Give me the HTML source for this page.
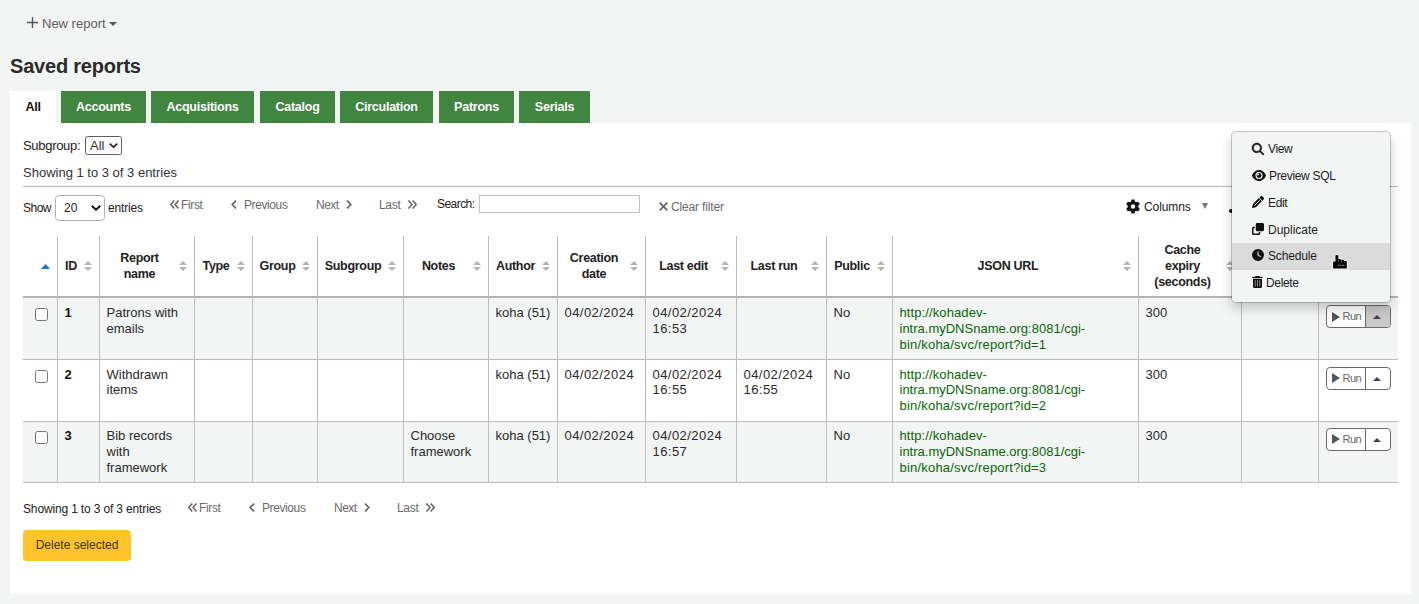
<!DOCTYPE html>
<html>
<head>
<meta charset="utf-8">
<title>Saved reports</title>
<style>
*{box-sizing:border-box;}
html,body{margin:0;padding:0;}
body{width:1419px;height:604px;overflow:hidden;background:#f3f4f4;font-family:"Liberation Sans",sans-serif;font-size:13px;line-height:16px;color:#202020;position:relative;}
.abs{position:absolute;white-space:nowrap;line-height:16px;}
svg{position:absolute;display:block;overflow:visible;}
#h1{left:10px;top:52px;font-size:20px;letter-spacing:-0.2px;font-weight:bold;color:#2b2b2b;line-height:28px;}
.tab{position:absolute;top:91px;height:32px;background:#408540;color:#fff;font-weight:bold;font-size:12.5px;letter-spacing:-0.25px;line-height:32px;text-align:center;white-space:nowrap;}
.tab.active{background:#fff;color:#111;}
#panel{position:absolute;left:10px;top:123px;width:1401px;height:471px;background:#fff;}
#hr1{position:absolute;left:23px;top:186px;width:1375px;height:1px;background:#b9b9b9;}
.box{position:absolute;background:#fff;}
.g{color:#6b6b6b;font-size:12px;}
table{position:absolute;left:23px;top:236px;width:1375px;border-collapse:collapse;table-layout:fixed;font-family:"Liberation Sans",sans-serif;font-size:13px;}
th,td{border-left:1px solid #bcbcbc;vertical-align:top;text-align:left;padding:0;white-space:nowrap;font-family:"Liberation Sans",sans-serif;}
th:first-child,td:first-child{border-left:none;}
thead tr{height:61px;}
th{vertical-align:middle;font-weight:bold;font-size:12.5px;letter-spacing:-0.3px;line-height:16px;text-align:center;position:relative;color:#222;border-bottom:2px solid #b4b4b4;padding:0 21px 0 7px;}
tbody tr{height:62px;}
tbody td{border-bottom:1px solid #bcbcbc;padding:7px 0 0 7px;line-height:16px;font-size:13px;color:#2a2a2a;position:relative;}
tbody tr.odd td{background:#f3f4f4;}
td.id{font-weight:bold;color:#111;}
td.d{letter-spacing:0.45px;}
.up1{position:relative;top:-1px;}
tr.r3{height:61px;}
tbody tr.r3 td{padding-top:6px;}
tr.r3 .cb{top:9px;}
tr.r3 .run{top:6px;}
td.url{color:#066706;}
.u1{letter-spacing:0.1px;}
.u3{letter-spacing:0.2px;}
.sort{position:absolute;right:6px;top:25px;width:9px;height:11px;}
.sort:before{content:"";position:absolute;left:0;top:0;border:4.5px solid transparent;border-bottom:4.3px solid #b5b5b5;border-top:none;}
.sort:after{content:"";position:absolute;left:0;top:6.1px;border:4.5px solid transparent;border-top:4.3px solid #b5b5b5;border-bottom:none;}
.cb{position:absolute;left:12px;top:10px;width:13px;height:13px;border:1px solid #767676;border-radius:2.5px;background:#fff;}
.run{position:absolute;left:7px;top:7px;width:65px;height:23px;border:1px solid #6a6a6a;border-radius:4px;background:#fff;overflow:hidden;}
.run .dv{position:absolute;left:38px;top:0;width:1px;height:21px;background:#6a6a6a;}
.run .rt{position:absolute;left:16px;top:3px;font-size:11px;letter-spacing:-0.55px;line-height:15px;color:#666;}
.run .pl{position:absolute;left:5px;top:5.5px;width:0;height:0;border-left:8.5px solid #555;border-top:5px solid transparent;border-bottom:5px solid transparent;}
.run .up{position:absolute;left:46.5px;top:9px;width:0;height:0;border-bottom:4px solid #444;border-left:4.5px solid transparent;border-right:4.5px solid transparent;}
.run .act{position:absolute;left:39px;top:0;width:24px;height:21px;background:#c9c9c9;}
#menu{position:absolute;left:1231px;top:131px;width:160px;height:172px;background:#f3f4f4;background-clip:padding-box;border:1px solid rgba(0,0,0,.2);border-radius:5px;box-shadow:0 6px 12px rgba(0,0,0,.18);}
#menu .hl{position:absolute;left:0;top:111px;width:158px;height:27px;background:#dbdbdb;}
.mi{position:absolute;white-space:nowrap;font-size:12px;line-height:16px;color:#1c1c1c;}
#del{position:absolute;left:23px;top:530px;width:108px;height:31px;background:#ffc32b;border-radius:4px;color:#3a3320;font-size:12px;line-height:31px;text-align:center;}
</style>
</head>
<body>
<!-- toolbar -->
<svg style="left:27px;top:17px" width="11" height="11" viewBox="0 0 11 11"><path d="M5.5 0v11M0 5.5h11" stroke="#565656" stroke-width="1.4" fill="none"/></svg>
<div class="abs" id="t_new" style="left:42px;top:16px;font-size:13px;color:#5e5e5e;">New report</div>
<svg style="left:109px;top:22px" width="8" height="4" viewBox="0 0 8 4"><path d="M0 0h8L4 4z" fill="#5a5a5a"/></svg>

<div class="abs" id="h1">Saved reports</div>

<div class="tab active" style="left:10px;width:46px;">All</div>
<div class="tab" style="left:61px;width:85px;">Accounts</div>
<div class="tab" style="left:151px;width:103px;">Acquisitions</div>
<div class="tab" style="left:260px;width:75px;">Catalog</div>
<div class="tab" style="left:340px;width:93px;">Circulation</div>
<div class="tab" style="left:439px;width:75px;">Patrons</div>
<div class="tab" style="left:519px;width:71px;">Serials</div>

<div id="panel"></div>

<!-- subgroup -->
<div class="abs" id="t_sub" style="left:23px;top:138px;font-size:13px;color:#222;letter-spacing:-0.3px;">Subgroup:</div>
<div class="box" style="left:85px;top:136px;width:37px;height:19px;border:1px solid #5f5f5f;border-radius:2.5px;"></div>
<div class="abs" id="t_all" style="left:90px;top:138px;font-size:13px;color:#333;">All</div>
<svg style="left:109px;top:143px" width="9" height="5" viewBox="0 0 9 5"><path d="M0.7 0.7L4.5 4.2L8.3 0.7" stroke="#222" stroke-width="1.7" fill="none"/></svg>

<div class="abs" id="t_show1" style="left:23px;top:165px;font-size:13px;color:#333;">Showing 1 to 3 of 3 entries</div>
<div id="hr1"></div>

<!-- length / paging -->
<div class="abs" id="t_show" style="left:23px;top:200px;font-size:12px;color:#222;letter-spacing:-0.5px;">Show</div>
<div class="box" style="left:55px;top:195px;width:50px;height:26px;border:1px solid #b0b0b0;border-radius:4px;"></div>
<div class="abs" id="t_20" style="left:64px;top:200px;font-size:12px;color:#222;">20</div>
<svg style="left:91px;top:205px" width="10" height="6" viewBox="0 0 10 6"><path d="M0.8 0.8L5 4.8L9.2 0.8" stroke="#111" stroke-width="1.9" fill="none"/></svg>
<div class="abs" id="t_ent" style="left:108px;top:200px;font-size:12px;color:#222;letter-spacing:-0.15px;">entries</div>

<svg style="left:170px;top:200px" width="9" height="9" viewBox="0 0 9 9"><path d="M4.300 0.5L0.8 4.500L4.300 8.500M8.500 0.5L5 4.500L8.500 8.500" stroke="#666" stroke-width="1.55" fill="none"/></svg>
<div class="abs g" id="t_first" style="left:181px;top:197px;letter-spacing:-0.35px;">First</div>
<svg style="left:231px;top:200px" width="6" height="9" viewBox="0 0 6 9"><path d="M5 0.600L1.200 4.500L5 8.400" stroke="#666" stroke-width="1.700" fill="none"/></svg>
<div class="abs g" id="t_prev" style="left:244px;top:197px;letter-spacing:-0.4px;">Previous</div>
<div class="abs g" id="t_next" style="left:316px;top:197px;letter-spacing:-0.5px;">Next</div>
<svg style="left:346px;top:200px" width="6" height="9" viewBox="0 0 6 9"><path d="M1 0.600L4.800 4.500L1 8.400" stroke="#666" stroke-width="1.700" fill="none"/></svg>
<div class="abs g" id="t_last" style="left:379px;top:197px;letter-spacing:-0.3px;">Last</div>
<svg style="left:408px;top:200px" width="9" height="9" viewBox="0 0 9 9"><path d="M0.5 0.5L4 4.500L0.5 8.500M4.700 0.5L8.200 4.500L4.700 8.500" stroke="#666" stroke-width="1.55" fill="none"/></svg>

<div class="abs" id="t_search" style="left:437px;top:196px;font-size:12px;color:#222;letter-spacing:-0.55px;">Search:</div>
<div class="box" style="left:479px;top:195px;width:161px;height:18px;border:1px solid #c2c2c2;"></div>
<svg style="left:659px;top:202px" width="9" height="9" viewBox="0 0 9 9"><path d="M0.7 0.7L8.3 8.3M8.3 0.7L0.7 8.3" stroke="#666" stroke-width="1.8" fill="none"/></svg>
<div class="abs g" id="t_clear" style="left:671px;top:199px;font-size:12px;letter-spacing:-0.15px;">Clear filter</div>

<!-- columns button -->
<svg style="left:1126px;top:199px" width="14" height="15" viewBox="0 0 512 512"><path fill="#111" d="M495.9 166.600c3.200 8.700 .500 18.400-6.400 24.600l-43.300 39.400c1.100 8.300 1.700 16.800 1.700 25.400s-.600 17.100-1.700 25.400l43.300 39.400c6.900 6.200 9.600 15.900 6.400 24.600c-4.400 11.900-9.700 23.300-15.800 34.300l-4.700 8.100c-6.600 11-14 21.400-22.100 31.200c-5.900 7.200-15.700 9.600-24.500 6.800l-55.700-17.700c-13.400 10.300-28.200 18.900-44 25.400l-12.500 57.100c-2 9.100-9 16.300-18.200 17.800c-13.800 2.300-28 3.500-42.500 3.500s-28.700-1.200-42.500-3.500c-9.200-1.500-16.200-8.700-18.200-17.800l-12.500-57.100c-15.800-6.500-30.600-15.100-44-25.400L83.100 425.900c-8.800 2.800-18.600 .300-24.500-6.800c-8.100-9.800-15.500-20.200-22.100-31.200l-4.700-8.100c-6.100-11-11.400-22.400-15.800-34.300c-3.200-8.700-.500-18.400 6.400-24.600l43.300-39.400C64.600 273.100 64 264.600 64 256s.600-17.100 1.700-25.400L22.400 191.200c-6.900-6.200-9.600-15.900-6.400-24.600c4.400-11.900 9.700-23.300 15.800-34.300l4.700-8.100c6.600-11 14-21.400 22.100-31.200c5.900-7.200 15.700-9.600 24.500-6.800l55.700 17.700c13.400-10.300 28.200-18.900 44-25.400l12.500-57.100c2-9.100 9-16.300 18.200-17.800C227.300 1.200 241.500 0 256 0s28.700 1.200 42.500 3.500c9.200 1.500 16.200 8.700 18.200 17.800l12.500 57.100c15.800 6.500 30.600 15.100 44 25.400l55.700-17.700c8.800-2.800 18.600-.300 24.500 6.800c8.100 9.800 15.500 20.200 22.100 31.200l4.700 8.100c6.100 11 11.400 22.400 15.800 34.300zM256 336a80 80 0 1 0 0-160 80 80 0 1 0 0 160z"/></svg>
<div class="abs" id="t_cols" style="left:1144px;top:199px;font-size:12px;color:#1a1a1a;letter-spacing:-0.1px;">Columns</div>
<svg style="left:1202px;top:203px" width="6" height="6" viewBox="0 0 6 6"><path d="M0 0h6L3 6z" fill="#777"/></svg>
<div style="position:absolute;left:1229px;top:209px;width:4px;height:4px;background:#111;border-radius:2px;"></div>

<table>
<colgroup>
<col style="width:34px"><col style="width:42px"><col style="width:95px"><col style="width:58px"><col style="width:65px"><col style="width:86px"><col style="width:85px"><col style="width:69px"><col style="width:88px"><col style="width:91px"><col style="width:90px"><col style="width:66px"><col style="width:246px"><col style="width:103px"><col style="width:77px"><col style="width:80px">
</colgroup>
<thead>
<tr>
<th><svg style="left:18px;top:28px" width="9" height="5" viewBox="0 0 9 5"><path d="M0 5h9L4.500 0z" fill="#1a6fd0"/></svg></th><th>ID<span class="sort"></span></th><th>Report<br>name<span class="sort"></span></th><th>Type<span class="sort"></span></th><th>Group<span class="sort"></span></th><th>Subgroup<span class="sort"></span></th><th>Notes<span class="sort"></span></th><th>Author<span class="sort"></span></th><th>Creation<br>date<span class="sort"></span></th><th>Last edit<span class="sort"></span></th><th>Last run<span class="sort"></span></th><th>Public<span class="sort"></span></th><th>JSON URL<span class="sort"></span></th><th>Cache<br>expiry<br>(seconds)<span class="sort"></span></th><th></th><th></th>
</tr>
</thead>
<tbody>
<tr class="odd"><td><span class="cb"></span></td><td class="id">1</td><td>Patrons with<br>emails</td><td></td><td></td><td></td><td></td><td>koha (51)</td><td class="d">04/02/2024</td><td class="d">04/02/2024<br>16:53</td><td></td><td>No</td><td class="url"><span class="u1">http://kohadev-</span><br>intra.myDNSname.org:8081/cgi-<br><span class="u3">bin/koha/svc/report?id=1</span></td><td>300</td><td></td><td><div class="run"><span class="act"></span><span class="pl"></span><span class="rt">Run</span><span class="dv"></span><span class="up"></span></div></td></tr>
<tr class="r2"><td><span class="cb"></span></td><td class="id">2</td><td>Withdrawn<br><span class="up1">items</span></td><td></td><td></td><td></td><td></td><td>koha (51)</td><td class="d">04/02/2024</td><td class="d">04/02/2024<br><span class="up1">16:55</span></td><td class="d">04/02/2024<br><span class="up1">16:55</span></td><td>No</td><td class="url"><span class="u1">http://kohadev-</span><br><span class="up1">intra.myDNSname.org:8081/cgi-</span><br><span class="u3 up1">bin/koha/svc/report?id=2</span></td><td>300</td><td></td><td><div class="run"><span class="pl"></span><span class="rt">Run</span><span class="dv"></span><span class="up"></span></div></td></tr>
<tr class="odd r3"><td><span class="cb"></span></td><td class="id">3</td><td>Bib records<br>with<br>framework</td><td></td><td></td><td></td><td>Choose<br>framework</td><td>koha (51)</td><td class="d">04/02/2024</td><td class="d">04/02/2024<br>16:57</td><td></td><td>No</td><td class="url"><span class="u1">http://kohadev-</span><br>intra.myDNSname.org:8081/cgi-<br><span class="u3">bin/koha/svc/report?id=3</span></td><td>300</td><td></td><td><div class="run"><span class="pl"></span><span class="rt">Run</span><span class="dv"></span><span class="up"></span></div></td></tr>
</tbody>
</table>

<!-- bottom paging -->
<div class="abs" id="t_show2" style="left:23px;top:501px;font-size:12px;color:#222;letter-spacing:-0.15px;">Showing 1 to 3 of 3 entries</div>
<svg style="left:188px;top:503px" width="9" height="9" viewBox="0 0 9 9"><path d="M4.300 0.5L0.8 4.500L4.300 8.500M8.500 0.5L5 4.500L8.500 8.500" stroke="#666" stroke-width="1.55" fill="none"/></svg>
<div class="abs g" id="b_first" style="left:199px;top:500px;letter-spacing:-0.35px;">First</div>
<svg style="left:249px;top:503px" width="6" height="9" viewBox="0 0 6 9"><path d="M5 0.600L1.200 4.500L5 8.400" stroke="#666" stroke-width="1.700" fill="none"/></svg>
<div class="abs g" id="b_prev" style="left:262px;top:500px;letter-spacing:-0.4px;">Previous</div>
<div class="abs g" id="b_next" style="left:334px;top:500px;letter-spacing:-0.5px;">Next</div>
<svg style="left:364px;top:503px" width="6" height="9" viewBox="0 0 6 9"><path d="M1 0.600L4.800 4.500L1 8.400" stroke="#666" stroke-width="1.700" fill="none"/></svg>
<div class="abs g" id="b_last" style="left:397px;top:500px;letter-spacing:-0.3px;">Last</div>
<svg style="left:426px;top:503px" width="9" height="9" viewBox="0 0 9 9"><path d="M0.5 0.5L4 4.500L0.5 8.500M4.700 0.5L8.200 4.500L4.700 8.500" stroke="#666" stroke-width="1.55" fill="none"/></svg>

<div id="del">Delete selected</div>

<!-- dropdown menu -->
<div id="menu"><div class="hl"></div></div>
<div class="mi" id="m_view" style="left:1268px;top:141px;letter-spacing:-0.35px;">View</div>
<div class="mi" id="m_prev" style="left:1269px;top:168px;letter-spacing:-0.32px;">Preview SQL</div>
<div class="mi" id="m_edit" style="left:1268px;top:195px;letter-spacing:-0.35px;">Edit</div>
<div class="mi" id="m_dup" style="left:1268px;top:222px;">Duplicate</div>
<div class="mi" id="m_sch" style="left:1268px;top:248px;letter-spacing:-0.15px;">Schedule</div>
<div class="mi" id="m_del" style="left:1266px;top:275px;letter-spacing:-0.35px;">Delete</div>

<svg style="left:1252px;top:143px" width="12" height="12" viewBox="0 0 512 512"><path fill="#111" stroke="#111" stroke-width="18" d="M416 208c0 45.900-14.900 88.300-40 122.700L502.600 457.400c12.500 12.500 12.500 32.800 0 45.300s-32.800 12.500-45.300 0L330.700 376c-34.400 25.200-76.800 40-122.700 40C93.100 416 0 322.900 0 208S93.100 0 208 0S416 93.100 416 208zM208 352a144 144 0 1 0 0-288 144 144 0 1 0 0 288z"/></svg>
<svg style="left:1252px;top:170px" width="14" height="11" viewBox="0 0 14 11"><path fill="#111" d="M7 0C3.600 0 1 2.600 0 5.500C1 8.400 3.600 11 7 11s6-2.600 7-5.500C13 2.600 10.400 0 7 0z"/><circle cx="7" cy="5.500" r="3.600" fill="#f3f4f4"/><circle cx="7" cy="5.500" r="2.400" fill="#111"/><circle cx="6.100" cy="4.500" r="1" fill="#f3f4f4"/></svg>
<svg style="left:1252px;top:196px" width="12" height="12" viewBox="0 0 512 512"><path fill="#111" d="M362.700 19.300L314.300 67.700 444.300 197.700l48.400-48.400c25-25 25-65.500 0-90.500L453.300 19.300c-25-25-65.500-25-90.500 0zm-71 71L58.600 323.500c-10.400 10.400-18 23.300-22.200 37.400L1 481.200C-1.500 489.700 .8 498.800 7 505s15.300 8.500 23.700 6.100l120.300-35.400c14.100-4.200 27-11.800 37.400-22.200L421.700 220.300 291.700 90.300z"/><path d="M122 392L316 198" stroke="#f3f4f4" stroke-width="40" stroke-linecap="round"/></svg>
<svg style="left:1252px;top:223px" width="12" height="12" viewBox="0 0 512 512"><path fill="#111" d="M288 448H64V224h64V160H64c-35.300 0-64 28.700-64 64V448c0 35.300 28.700 64 64 64H288c35.300 0 64-28.700 64-64V384H288v64zm-64-96H448c35.300 0 64-28.700 64-64V64c0-35.300-28.700-64-64-64H224c-35.300 0-64 28.700-64 64V288c0 35.300 28.700 64 64 64z"/></svg>
<svg style="left:1252px;top:249px" width="12" height="12" viewBox="0 0 512 512"><path fill="#111" d="M256 0a256 256 0 1 1 0 512A256 256 0 1 1 256 0zM232 120V256c0 8 4 15.500 10.700 20l96 64c11 7.400 25.900 4.400 33.300-6.700s4.400-25.900-6.700-33.300L280 243.200V120c0-13.300-10.700-24-24-24s-24 10.700-24 24z"/></svg>
<svg style="left:1252px;top:276px" width="11" height="12" viewBox="0 0 448 512"><path fill="#111" d="M135.200 17.700L128 32H32C14.300 32 0 46.300 0 64S14.300 96 32 96H416c17.700 0 32-14.300 32-32s-14.300-32-32-32H320l-7.200-14.300C307.400 6.800 296.300 0 284.200 0H163.800c-12.100 0-23.200 6.800-28.600 17.700zM32 128H416V448c0 35.300-28.700 64-64 64H96c-35.300 0-64-28.700-64-64V128z"/><path d="M128 192V432M224 192V432M320 192V432" stroke="#a8a8a8" stroke-width="34" stroke-linecap="round"/></svg>
<svg style="left:1332px;top:254px" width="17" height="17" viewBox="0 0 17 17"><path d="M1.100 7.500H3.400V1.800Q3.400 1 4.900 1Q6.400 1 6.400 1.800V5.100L6.900 4.900H8Q8.800 4.900 8.800 5.700V6L10.200 5.800H11.200Q12 5.800 12 6.600V7.100L12.900 7H14Q14.800 7 14.800 7.800V14.600H1.100Z" fill="#000" stroke="#fff" stroke-width="1.700" stroke-linejoin="round" paint-order="stroke"/><path d="M6.650 5.600V8M9.500 6.500V8.500M12.450 7.500V9" stroke="#aaa" stroke-width=".55"/><path d="M5.800 11.300H13.300" stroke="#d8d8d8" stroke-width=".9" stroke-dasharray="1.100 .7"/></svg>
</body>
</html>
